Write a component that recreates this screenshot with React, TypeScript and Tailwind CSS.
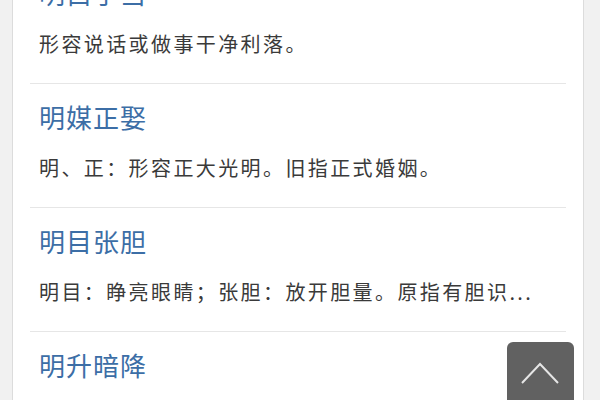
import React from "react";

const items = [
  { title: "明白了当", desc: "形容说话或做事干净利落。" },
  { title: "明媒正娶", desc: "明、正：形容正大光明。旧指正式婚姻。" },
  { title: "明目张胆", desc: "明目：睁亮眼睛；张胆：放开胆量。原指有胆识..." },
  { title: "明升暗降", desc: "表面上提升其职位，实际上是削弱其权力。" },
];

export default function App() {
  return (
    <div
      className="relative h-[400px] w-[600px] overflow-hidden bg-[#f1f1f1]"
      style={{ fontFamily: '"Noto Sans CJK SC", "Noto Sans", sans-serif' }}
    >
      <div className="ml-[12px] flex h-full w-[572px] flex-col overflow-hidden border-x border-[#dcdcdc] bg-white">
        <div className="-mt-[40px] flex flex-col">
          {items.map((it) => (
            <div
              key={it.title}
              className="mx-[17px] h-[124px] shrink-0 border-b border-[#e6e6e6] pl-[9px] pt-[15px]"
            >
              <div className="h-[36px] text-[26px] leading-[36px] tracking-[1px] text-[#3c6ea6] whitespace-nowrap">
                {it.title}
              </div>
              <div className="mt-[18px] h-[30px] text-[20px] leading-[30px] tracking-[2.4px] text-[#3a3a3a] whitespace-nowrap">
                {it.desc}
              </div>
            </div>
          ))}
        </div>
      </div>
      <div className="absolute left-[507px] top-[342px] flex h-[70px] w-[67px] justify-center rounded-[6px] bg-[#616161]">
        <svg width="67" height="70" viewBox="0 0 67 70">
          <polyline
            points="15,41 33,22 51,41"
            fill="none"
            stroke="#e6e6e6"
            strokeWidth="2"
          />
        </svg>
      </div>
    </div>
  );
}
